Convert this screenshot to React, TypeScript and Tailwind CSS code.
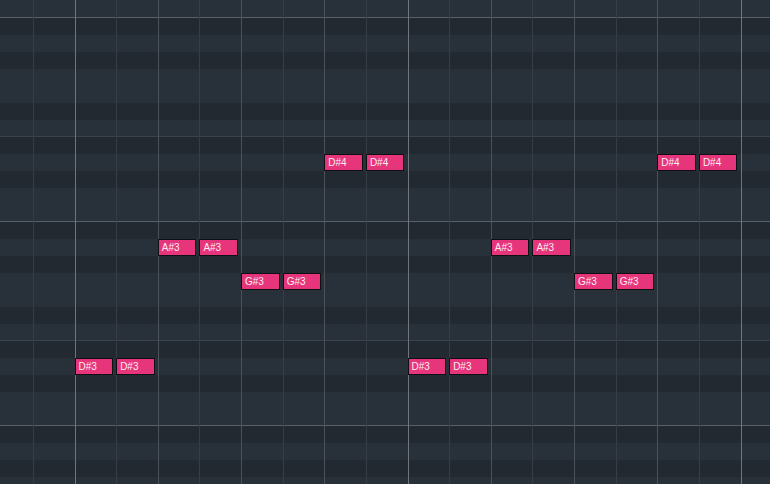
const COL = 41.625
const ROW = 17
const X0 = -8.75
const Y0 = -16

// pitch names from the top row down
const PITCHES = [
  'C#5', 'C5', 'B4', 'A#4', 'A4', 'G#4', 'G4', 'F#4', 'F4', 'E4', 'D#4', 'D4', 'C#4', 'C4',
  'B3', 'A#3', 'A3', 'G#3', 'G3', 'F#3', 'F3', 'E3', 'D#3', 'D3', 'C#3', 'C3',
  'B2', 'A#2', 'A2', 'G#2',
]
const LIGHT = ['C', 'C#', 'D#', 'F', 'G', 'G#', 'A#']

const NOTES: [number, string][] = [
  [2, 'D#3'], [3, 'D#3'], [4, 'A#3'], [5, 'A#3'], [6, 'G#3'], [7, 'G#3'], [8, 'D#4'], [9, 'D#4'],
  [10, 'D#3'], [11, 'D#3'], [12, 'A#3'], [13, 'A#3'], [14, 'G#3'], [15, 'G#3'], [16, 'D#4'], [17, 'D#4'],
]

function Row({ name }: { name: string }) {
  const pc = name.replace(/\d/g, '')
  const light = LIGHT.includes(pc)
  const line =
    pc === 'C' ? 'border-b-[#5a6068]' : pc === 'F' ? 'border-b-[#3c434d]' : 'border-b-transparent'
  return (
    <div
      className={`h-[17px] shrink-0 border-b ${line} ${light ? 'bg-[#283039]' : 'bg-[#232931]'}`}
    />
  )
}

function ColLine({ k }: { k: number }) {
  const bar = (k - 2) % 8 === 0
  const beat = (k - 2) % 2 === 0
  const c = bar ? 'border-l-[#70757d]' : beat ? 'border-l-[#4b515a]' : 'border-l-[#363d47]'
  return <div className={`w-[41.625px] shrink-0 h-full border-l ${c}`} />
}

export default function App() {
  return (
    <div className="relative w-[770px] h-[484px] overflow-hidden bg-[#232931]">
      {/* key rows */}
      <div className="flex flex-col mt-[-16px]">
        {PITCHES.map((p, i) => (
          <Row key={i} name={p} />
        ))}
      </div>

      {/* grid columns */}
      <div className="absolute inset-y-0 left-[-8.75px] flex">
        {Array.from({ length: 21 }, (_, k) => (
          <ColLine key={k} k={k} />
        ))}
      </div>

      {/* notes */}
      {NOTES.map(([k, n], i) => (
        <div
          key={i}
          className="absolute h-[17px] w-[38.6px] bg-[#e6357a] border border-[#0e1013] flex items-center pl-[3px] text-[10px] leading-none text-[#fdeef3] font-['Liberation_Sans',sans-serif]"
          style={{ left: X0 + COL * k, top: Y0 + ROW * PITCHES.indexOf(n) }}
        >
          {n}
        </div>
      ))}
    </div>
  )
}
